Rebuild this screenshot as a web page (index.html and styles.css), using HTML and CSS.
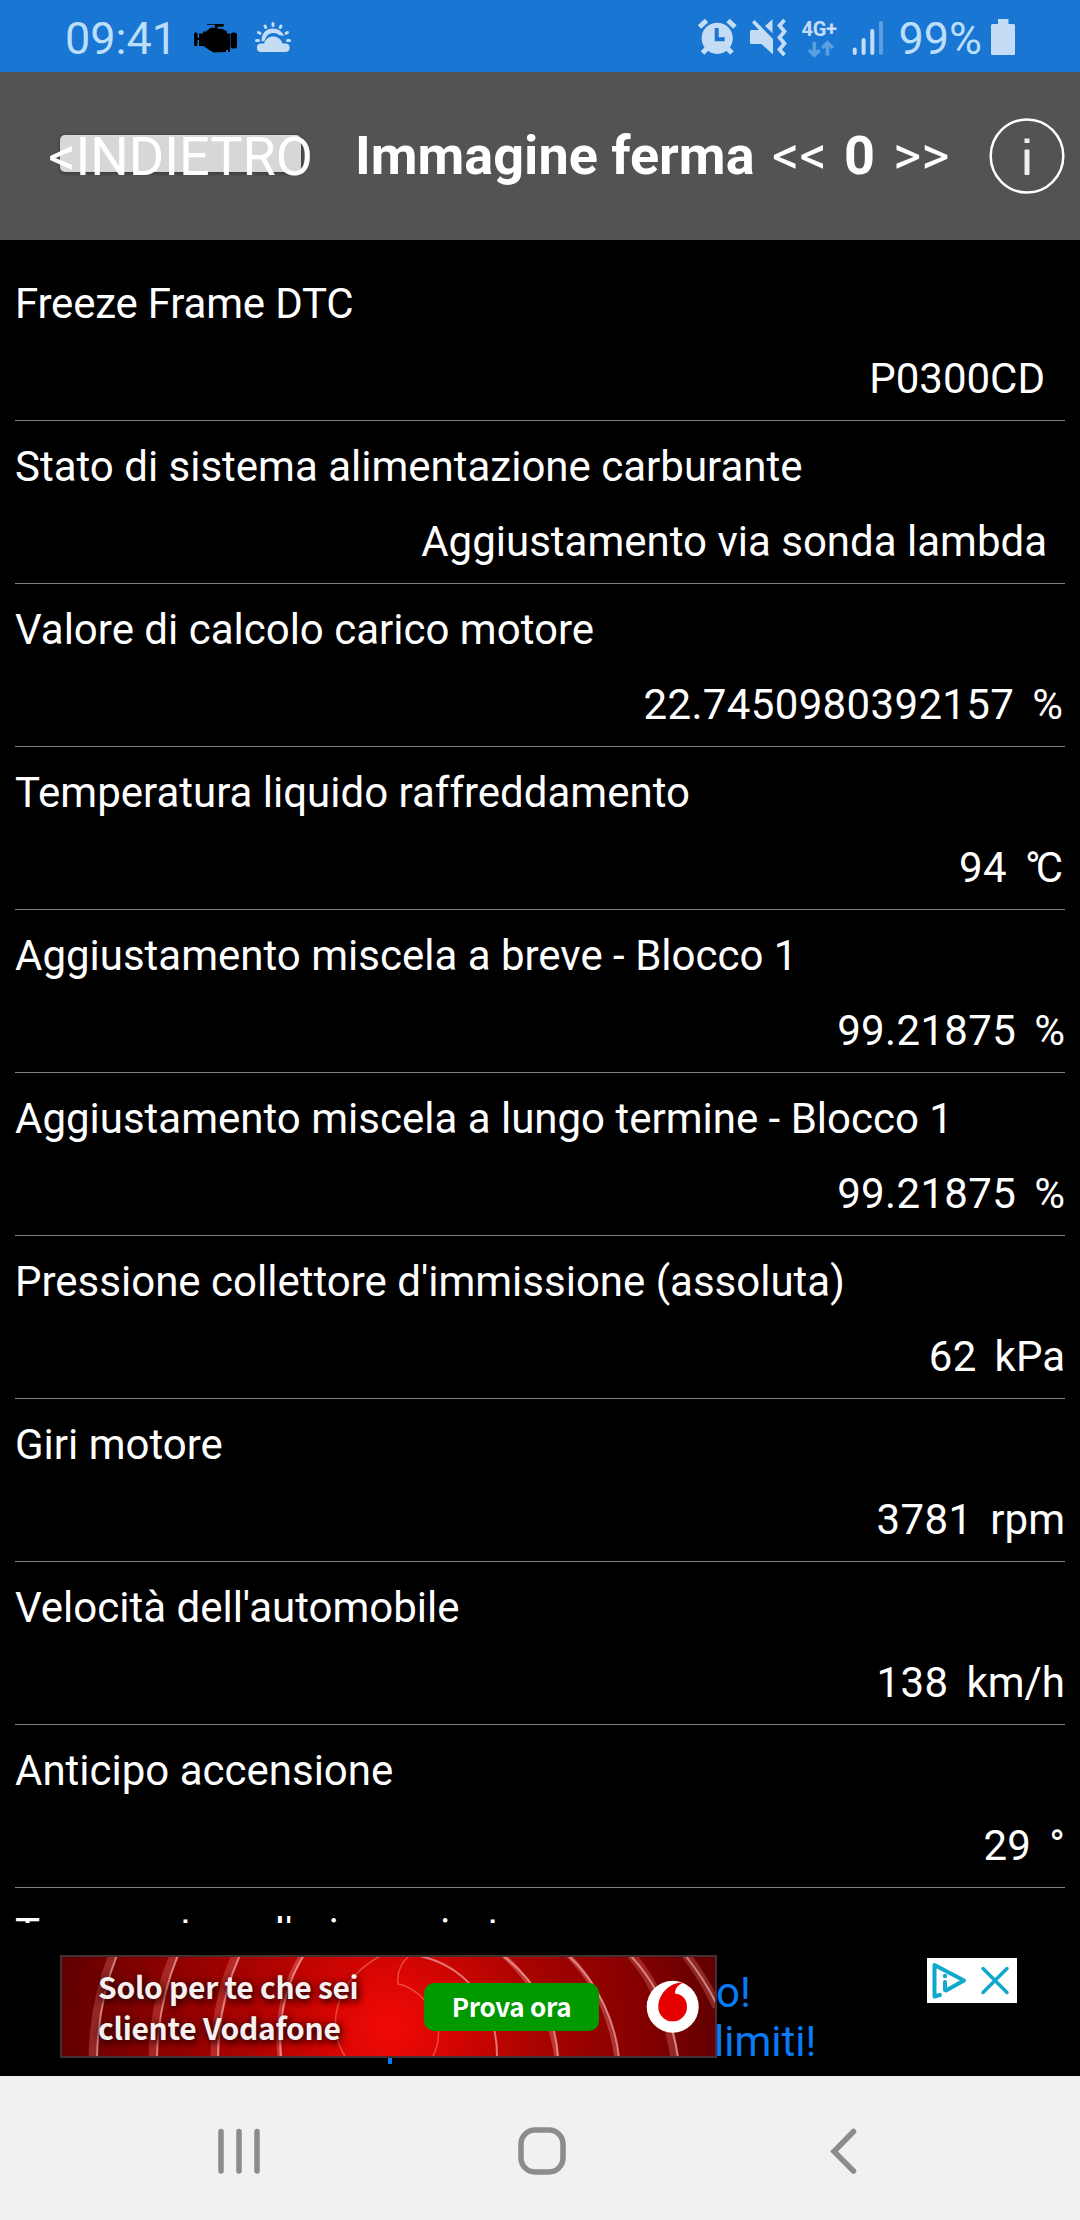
FILE: index.html
```
<!DOCTYPE html>
<html lang="it">
<head>
    <meta charset="UTF-8">
    <meta name="viewport" content="width=device-width, initial-scale=1.0">
    <title>Immagine ferma</title>
    <link rel="stylesheet" href="styles.css">
</head>
<body>
<div class="status-bar">
    <span class="clock">09:41</span>
    <!-- engine -->
    <svg class="icon-engine" width="44" height="72" viewBox="194 0 44 72">
        <path fill="#000" d="M207 24h16.700v2.700h-6.200v2h4.500l5 2.800v2h3v18.500h-2v-2h-2v2l-12.500.500-5-3-5-3.500h-4.500v-6h-1.500v4.200q0 2-1.700 2t-1.700-2v-10q0-2 1.700-2t1.700 2v3.500h1.500v-4.200h4v-2h3l4.500-3.800h4.300v-3H207z"/>
        <rect x="230.500" y="32.500" width="6.500" height="16" rx="2.500" fill="#000"/>
    </svg>
    <!-- weather -->
    <svg class="icon-weather" width="40" height="72" viewBox="253 0 40 72">
        <path fill="#c5dcf5" d="M261.500 41c0-8 5-12.500 11.500-12.500 5 0 9.500 3 11 7.500-1.500-.500-3-.7-4.500-.7-2-1.800-4.500-2.500-7-2.300-4 .3-6.500 3-7.700 7.500-1.200 1-2.500 1-3.300.5z"/>
        <path fill="#c5dcf5" d="M260.500 52a4.300 4.300 0 0 1 0-8.500h3.500c1.500-4.500 5-7 9-7 4.500 0 8 2.500 9.500 7h3.500a4.300 4.300 0 0 1 0 8.500z"/>
        <g stroke="#c5dcf5" stroke-width="3" stroke-linecap="round">
            <path d="M273 23.500v2M265 26l.8 1.500M281 26l-.8 1.500M258.500 32.500l1.500.8M287.500 32.500l-1.500.8M256.500 40.500h2M287.500 40.500h2"/>
        </g>
    </svg>
    <!-- alarm -->
    <svg class="icon-alarm" width="42" height="72" viewBox="696 0 42 72">
        <circle cx="717.200" cy="38.300" r="15.600" fill="#c5dcf5"/>
        <path stroke="#c5dcf5" stroke-width="5" d="M699.500 27l7-6.500M735 27l-7-6.500M702.500 53l6-6M732 53l-6-6"/>
        <path stroke="#1976d2" stroke-width="4" fill="none" d="M716.700 28v11.300h8"/>
    </svg>
    <!-- vibrate -->
    <svg class="icon-mute" width="38" height="72" viewBox="749 0 38 72">
        <path fill="#c5dcf5" d="M751.500 30h7.500l-7-7.500 2.500-2.500 18.500 19v15.500L761.500 44h-10q-1.500 0-1.500-1.500v-11q0-1.500 1.500-1.500zM772.500 19.300v13.900L765 26z"/>
        <path stroke="#c5dcf5" stroke-width="3.800" fill="none" d="M784.500 20l-5 5.500 5 6-5 6 5 6-5 6 5 5.500"/>
    </svg>
    <!-- network -->
    <svg class="icon-net" width="40" height="72" viewBox="800 0 40 72">
        <text x="801.500" y="36" textLength="35.500" class="net-label">4G+</text>
        <path stroke="#5b9fe2" stroke-width="3.600" fill="none" d="M814.300 42v13M809 50l5.300 5.300 5.300-5.300M827.500 55.500V43M822.200 48l5.300-5.300 5.300 5.300"/>
    </svg>
    <svg class="icon-signal" width="34" height="72" viewBox="851 0 34 72">
        <g stroke="#c5dcf5" stroke-width="4" stroke-linecap="round">
            <path d="M854.700 49.500v3.500M863.600 40v13M872.300 31v22"/>
            <path stroke="#5b9fe2" d="M881 23v30"/>
        </g>
    </svg>
    <span class="battery-text">99%</span>
    <svg class="icon-battery" width="26" height="72" viewBox="990 0 26 72">
        <path fill="#c5dcf5" d="M998 19h10.500v5h5q1.500 0 1.500 1.500v28q0 1.500-1.500 1.500h-21q-1.500 0-1.500-1.500v-28q0-1.500 1.500-1.500h5.500z"/>
    </svg>
</div>

<div class="header">
    <div class="back-btn"><span>&lt;INDIETRO</span></div>
    <div class="title">Immagine ferma</div>
    <div class="prev">&lt;&lt;</div>
    <div class="frame-number">0</div>
    <div class="next">&gt;&gt;</div>
    <svg class="info" width="76" height="78" viewBox="0 0 76 78">
        <ellipse cx="38" cy="39" rx="36.300" ry="36.500" fill="none" stroke="#fff" stroke-width="2.500"/>
        <rect x="35.500" y="21.500" width="5" height="4.500" fill="#eee"/>
        <rect x="35.500" y="32.500" width="5" height="25.500" rx="1" fill="#eee"/>
    </svg>
</div>

<div class="list">
    <div class="row">
        <div class="label tight">Freeze Frame DTC</div>
        <div class="value inset"><span>P0300CD</span><span class="unit"></span></div>
    </div>
    <div class="row">
        <div class="label">Stato di sistema alimentazione carburante</div>
        <div class="value"><span>Aggiustamento via sonda lambda</span><span class="unit"></span></div>
    </div>
    <div class="row">
        <div class="label">Valore di calcolo carico motore</div>
        <div class="value inset"><span class="num">22.7450980392157</span><span class="unit">%</span></div>
    </div>
    <div class="row">
        <div class="label">Temperatura liquido raffreddamento</div>
        <div class="value inset"><span class="num">94</span><span class="unit celsius">°C</span></div>
    </div>
    <div class="row">
        <div class="label">Aggiustamento miscela a breve - Blocco 1</div>
        <div class="value"><span class="num">99.21875</span><span class="unit">%</span></div>
    </div>
    <div class="row">
        <div class="label">Aggiustamento miscela a lungo termine - Blocco 1</div>
        <div class="value"><span class="num">99.21875</span><span class="unit">%</span></div>
    </div>
    <div class="row">
        <div class="label">Pressione collettore d'immissione (assoluta)</div>
        <div class="value"><span class="num">62</span><span class="unit">kPa</span></div>
    </div>
    <div class="row">
        <div class="label">Giri motore</div>
        <div class="value"><span class="num">3781</span><span class="unit">rpm</span></div>
    </div>
    <div class="row">
        <div class="label">Velocità dell'automobile</div>
        <div class="value"><span class="num">138</span><span class="unit">km/h</span></div>
    </div>
    <div class="row">
        <div class="label">Anticipo accensione</div>
        <div class="value"><span class="num">29</span><span class="unit">°</span></div>
    </div>
    <div class="row">
        <div class="label"><span class="wide-gap">Temperatura</span> l'aria aspirata</div>
    </div>
</div>

<div class="ad">
    <div class="banner">
        <svg class="banner-art" width="657" height="103" viewBox="0 0 657 103">
            <defs>
                <radialGradient id="glow" gradientUnits="userSpaceOnUse" cx="330" cy="72" r="330">
                    <stop offset="0" stop-color="#f20a05"/>
                    <stop offset="0.150" stop-color="#dc0603"/>
                    <stop offset="0.450" stop-color="#a80300"/>
                    <stop offset="0.800" stop-color="#800000"/>
                    <stop offset="1" stop-color="#600000"/>
                </radialGradient>
            </defs>
            <rect width="657" height="103" fill="url(#glow)"/>
            <g fill="none" stroke="#ff9a90" stroke-opacity="0.250" stroke-width="9">
                <path d="M53 0Q34 48 33 103M114 0Q94 48 93 103M176 0Q155 48 155 103"/>
                <path d="M571 0Q605 38 615 103M626 0Q645 25 657 52"/>
            </g>
            <g fill="none" stroke="#ffb0a8" stroke-opacity="0.300" stroke-width="5">
                <path d="M242 0Q214 45 220 103M508 0Q548 40 557 103M443 0Q488 40 497 103"/>
            </g>
            <g fill="none" stroke="#ffd0cc" stroke-opacity="0.550" stroke-width="2">
                <path d="M57 0Q38 48 37 103M118 0Q98 48 97 103M180 0Q158 48 158 103M244 0Q216 45 221 103"/>
                <path d="M355 0C400 8 438 45 437 103M442 0C475 25 496 60 498 103M508 0C540 30 556 70 559 103M570 0C603 35 614 75 618 103M625 0Q645 25 657 50"/>
            </g>
            <g fill="none" stroke="#ff8a80" stroke-opacity="0.500" stroke-width="1.500">
                <path d="M322 0C275 25 265 70 286 103M350 0Q336 12 338 29C360 33 392 65 372 103"/>
            </g>
            <circle cx="612.700" cy="51.700" r="26" fill="#fff"/>
            <path fill="#e60000" d="M625 27.500C610 26 598.300 39 598.300 52a14.300 14.300 0 0 0 28.700 0c0-8-5-13-12-13.500 0-5.500 4-10 10-11z"/>
        </svg>
        <div class="banner-text">Solo per te che sei<br>cliente Vodafone</div>
        <div class="banner-btn">Prova ora</div>
    </div>
    <div class="ad-copy"><span class="first">o!</span><br>limiti!</div>
    <svg class="ad-choices" width="90" height="45" viewBox="0 0 90 45">
        <rect width="90" height="45" fill="#fff"/>
        <g fill="none" stroke="#0fa9cb" stroke-width="4" stroke-linecap="round" stroke-linejoin="round">
            <path d="M13 37l-5.500 1.500V7L37 22.500 19 32.500"/>
            <path d="M18 24v8"/>
            <path stroke-width="3.500" d="M56 10.500l24 24M80 10.500l-24 24"/>
        </g>
        <circle cx="18" cy="18" r="2.200" fill="#0fa9cb"/>
    </svg>
    <div class="ad-mark"></div>
</div>

<div class="nav-bar">
    <svg width="48" height="48" viewBox="0 0 48 48">
        <path stroke="#8c8c8c" stroke-width="5.500" stroke-linecap="round" d="M6 4.500v39.500M24 4.500v39.500M42 4.500v39.500"/>
    </svg>
    <svg width="48" height="48" viewBox="0 0 48 48">
        <rect x="3" y="3" width="42" height="42" rx="14" fill="none" stroke="#8c8c8c" stroke-width="5.500"/>
    </svg>
    <svg width="48" height="48" viewBox="0 0 48 48">
        <path fill="none" stroke="#8c8c8c" stroke-width="5.500" stroke-linecap="round" d="M33.500 4.500L14 24.500l19.500 19.500"/>
    </svg>
</div>
</body>
</html>
```
FILE: styles.css
```
* {
    box-sizing: border-box;
}

body {
    margin: 0;
    width: 1080px;
    height: 2220px;
    overflow: hidden;
    background: #000;
    color: #fff;
    font-family: Roboto, "Liberation Sans", sans-serif;
}

svg {
    display: block;
    flex: none;
}

/* Status bar */
.status-bar {
    display: flex;
    height: 72px;
    padding: 0 64px 0 65px;
    background: #1976d2;
    color: #bbdefb;
    font-size: 45px;
    line-height: 77px;
    white-space: nowrap;
}

.clock {
    width: 112px;
}

.icon-engine {
    margin-left: 17px;
}

.icon-weather {
    margin-left: 15px;
}

.icon-alarm {
    margin-left: auto;
}

.icon-mute {
    margin-left: 11px;
}

.icon-net {
    margin-left: 13px;
}

.icon-signal {
    margin-left: 11px;
}

.net-label {
    font-size: 20px;
    font-weight: bold;
    fill: #c5dcf5;
}

.battery-text {
    width: 84px;
    margin-left: 13.5px;
    margin-right: 7.5px;
}

/* Header */
.header {
    display: flex;
    align-items: center;
    height: 168px;
    padding-left: 60px;
    background: #535353;
    font-size: 54px;
    line-height: 168px;
    white-space: nowrap;
}

.back-btn {
    display: flex;
    justify-content: center;
    width: 241px;
    height: 37px;
    margin-bottom: 5px;
    border-radius: 5px;
    background: #d6d8d7;
    box-shadow: 0 1px 4px rgba(0, 0, 0, 0.4);
    line-height: 43px;
}

.title {
    width: 400px;
    margin-left: 54px;
    font-weight: bold;
}

.prev {
    width: 55px;
    margin-left: 17px;
}

.frame-number {
    width: 31px;
    margin-left: 17px;
    font-weight: bold;
}

.next {
    width: 55px;
    margin-left: 18px;
}

.info {
    margin-left: 41px;
}

/* Freeze frame list */
.list {
    height: 1683px;
    padding: 18px 15px 0;
    overflow: hidden;
    font-size: 42px;
    line-height: 71px;
    white-space: nowrap;
}

.row {
    height: 163px;
    padding: 10px 0;
    border-bottom: 1px solid #808080;
}

.tight {
    letter-spacing: -0.2px;
}

.wide-gap {
    margin-right: 12px;
}

.value {
    display: flex;
    justify-content: flex-end;
    gap: 18px;
    margin-top: 4px;
}

.inset {
    padding-right: 2px;
}

.num {
    letter-spacing: 0.35px;
}

.celsius {
    margin-right: 5px;
    letter-spacing: -5px;
}

/* Ad */
.ad {
    position: relative;
    display: flex;
    align-items: flex-start;
    height: 153px;
    padding: 32px 63px 0 60px;
}

.banner {
    position: relative;
    z-index: 1;
    display: flex;
    flex: none;
    width: 657px;
    height: 103px;
    font-family: "Noto Sans CJK JP", "Noto Sans", sans-serif;
    font-weight: bold;
    white-space: nowrap;
}

.banner::after {
    content: "";
    position: absolute;
    inset: 0;
    border: 2px solid #443030;
}

.banner-art {
    position: absolute;
    left: 0;
    top: 0;
}

.banner-text {
    position: relative;
    width: 325px;
    padding: 11px 0 0 38px;
    font-size: 30px;
    line-height: 41px;
    letter-spacing: -0.3px;
    color: #f6f0f0;
    text-shadow: 2px 3px 6px #300000, 0 0 8px rgba(60, 0, 0, 0.8);
}

.banner-btn {
    position: relative;
    width: 175px;
    height: 48px;
    margin: 28px 0 0 39px;
    border-radius: 10px;
    background: #009900;
    font-size: 26px;
    line-height: 45px;
    letter-spacing: -0.3px;
    text-align: center;
}

.ad-copy {
    margin: 13px 0 0 -3px;
    color: #0a7af5;
    font-size: 42px;
    line-height: 49px;
    white-space: nowrap;
}

.first {
    margin-left: 2px;
}

.ad-choices {
    margin: 3px 0 0 auto;
}

/* descender of the line hidden by the banner */
.ad-mark {
    position: absolute;
    left: 388px;
    top: 135px;
    width: 4px;
    height: 6px;
    background: #0a7af5;
}

/* Navigation */
.nav-bar {
    display: flex;
    justify-content: space-between;
    align-items: center;
    height: 144px;
    padding: 6px 212px 0 215px;
    background: #f1f1f1;
}
```
